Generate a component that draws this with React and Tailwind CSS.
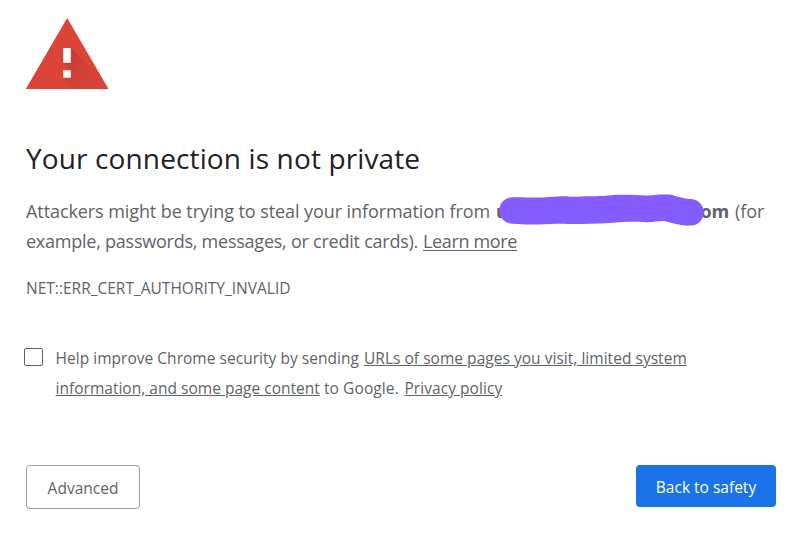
function WarningIcon() {
  return (
    <svg className="block h-[72px] w-[84px]" viewBox="0 0 84 72" aria-hidden="true">
      <defs>
        <linearGradient id="castShadow" gradientUnits="userSpaceOnUse" x1="42" y1="40" x2="66" y2="64">
          <stop offset="0" stopColor="#b5362b" stopOpacity="0.55" />
          <stop offset="1" stopColor="#c53d31" stopOpacity="0.12" />
        </linearGradient>
      </defs>
      <path d="M42.2 0 L83.5 71 H0.8 Z" fill="#db4437" />
      <path d="M45.8 30 L68.5 52 L79.5 71 H49 L38.2 59.8 L45.8 52.3 L38.2 44.8 Z" fill="url(#castShadow)" />
      <path d="M38.2 30 H45.8 V44.8 H38.2 Z M38.2 52.3 H45.8 V59.8 H38.2 Z" fill="#fff" />
    </svg>
  );
}

function Redaction() {
  return (
    <svg className="absolute left-[2px] top-[-2px] h-[36px] w-[208px]" viewBox="0.5 0 206 36" preserveAspectRatio="none" aria-hidden="true">
      <path
        d="M15 3.2 C25 3 38 4 48 3.3 C58 2.8 62 2.2 70 2.4 C78 3.4 83 2.2 93 2.2 C103 2.2 108 1.8 115 1 C125 0.5 138 1 149 1.6 C156 0.8 162 0 170 0.6 C178 2 182 4.5 191 5 A13.3 13.3 0 0 1 191 31.6 C182 32.2 174 29.2 165 27 C157 26.8 153 28.8 145 28 C133 27.6 124 27.8 115 28.8 C104 30 95 29.4 84 29.9 C72 30.6 67 29.2 58 29.8 C47 30.4 34 31 24 30.2 L15 29.8 A13.3 13.3 0 0 1 15 3.2 Z"
        fill="#855cff"
      />
    </svg>
  );
}

export default function App() {
  return (
    <main className="flex h-[547px] w-[801px] flex-col overflow-hidden whitespace-nowrap bg-white pl-[26px] pr-[25px] pt-[18px] font-['Open_Sans','Noto_Sans',sans-serif] text-[#5f6368]">
      <div className="-ml-px h-[72px]">
        <WarningIcon />
      </div>

      <h1 className="mt-[51px] text-[28px] leading-[34px] tracking-[0.13px] text-[#202124]">
        Your connection is not private
      </h1>

      <div className="mt-[21px] text-[18px] leading-[30px]">
        <p className="flex">
          <span className="w-[470px] tracking-[-0.085px]">Attackers might be trying to steal your information from</span>
          <strong className="relative flex w-[239px] justify-between pr-[6px] font-bold tracking-[-0.2px]">
            <span>u</span>
            <span>om</span>
            <Redaction />
          </strong>
          <span className="tracking-[-0.1px]">(for</span>
        </p>
        <p className="flex">
          <span className="w-[397px] tracking-[-0.24px]">example, passwords, messages, or credit cards).</span>
          <a className="tracking-[-0.35px] underline underline-offset-2">Learn more</a>
        </p>
      </div>

      <p className="mt-[22px] text-[15.5px] leading-5">NET::ERR_CERT_AUTHORITY_INVALID</p>

      <div className="mt-[45px] flex text-[15.5px] leading-[30px]">
        <span className="-ml-[2px] mt-[5px] h-[18px] w-[19px] shrink-0 rounded-[2px] border border-[#5f6368]" role="checkbox" aria-checked="false" />
        <div className="ml-[12.5px]">
          <p className="flex">
            <span className="w-[308.5px] tracking-[0.03px]">Help improve Chrome security by sending</span>
            <a className="tracking-[0.03px] underline underline-offset-1">URLs of some pages you visit, limited system</a>
          </p>
          <p className="flex">
            <a className="tracking-[0.02px] underline underline-offset-1">information, and some page content</a>
            <span className="ml-1 w-[80.5px] tracking-[0.1px]">to Google.</span>
            <a className="tracking-[0.06px] underline underline-offset-1">Privacy policy</a>
          </p>
        </div>
      </div>

      <div className="mt-[62px] flex items-start justify-between text-[15.5px]">
        <button className="h-[44px] w-[114px] rounded-[4px] border border-[#9aa0a6] pt-[4px]">Advanced</button>
        <button className="h-[42px] w-[140px] rounded-[4px] bg-[#1a73e8] pt-[4px] text-white">Back to safety</button>
      </div>
    </main>
  );
}
